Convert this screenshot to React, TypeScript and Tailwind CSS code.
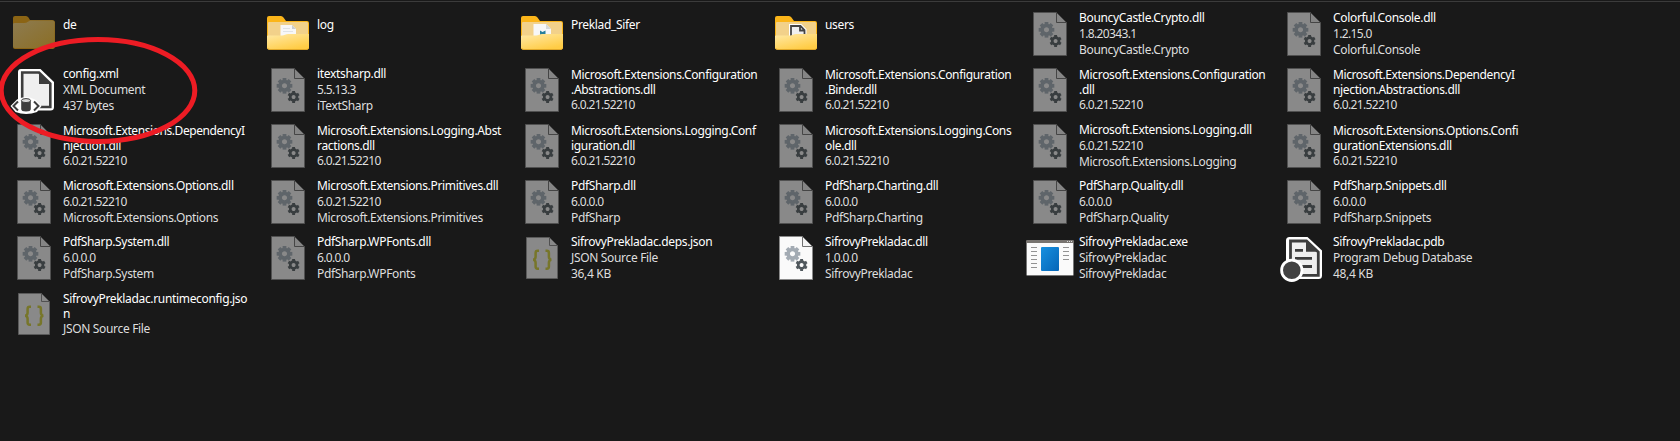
import React from "react";

type Kind = "folder" | "folderDoc" | "folderSheet" | "folderUsers" | "xml" | "dll" | "dllBright" | "json" | "exe" | "pdb";
type Entry = { kind: Kind; name: string[]; meta?: string[] };

const V = "6.0.21.52210";
const entries: Entry[] = [
  { kind: "folder", name: ["de"] },
  { kind: "folderDoc", name: ["log"] },
  { kind: "folderSheet", name: ["Preklad_Sifer"] },
  { kind: "folderUsers", name: ["users"] },
  { kind: "dll", name: ["BouncyCastle.Crypto.dll"], meta: ["1.8.20343.1", "BouncyCastle.Crypto"] },
  { kind: "dll", name: ["Colorful.Console.dll"], meta: ["1.2.15.0", "Colorful.Console"] },
  { kind: "xml", name: ["config.xml"], meta: ["XML Document", "437 bytes"] },
  { kind: "dll", name: ["itextsharp.dll"], meta: ["5.5.13.3", "iTextSharp"] },
  { kind: "dll", name: ["Microsoft.Extensions.Configuration", ".Abstractions.dll"], meta: [V] },
  { kind: "dll", name: ["Microsoft.Extensions.Configuration", ".Binder.dll"], meta: [V] },
  { kind: "dll", name: ["Microsoft.Extensions.Configuration", ".dll"], meta: [V] },
  { kind: "dll", name: ["Microsoft.Extensions.DependencyI", "njection.Abstractions.dll"], meta: [V] },
  { kind: "dll", name: ["Microsoft.Extensions.DependencyI", "njection.dll"], meta: [V] },
  { kind: "dll", name: ["Microsoft.Extensions.Logging.Abst", "ractions.dll"], meta: [V] },
  { kind: "dll", name: ["Microsoft.Extensions.Logging.Conf", "iguration.dll"], meta: [V] },
  { kind: "dll", name: ["Microsoft.Extensions.Logging.Cons", "ole.dll"], meta: [V] },
  { kind: "dll", name: ["Microsoft.Extensions.Logging.dll"], meta: [V, "Microsoft.Extensions.Logging"] },
  { kind: "dll", name: ["Microsoft.Extensions.Options.Confi", "gurationExtensions.dll"], meta: [V] },
  { kind: "dll", name: ["Microsoft.Extensions.Options.dll"], meta: [V, "Microsoft.Extensions.Options"] },
  { kind: "dll", name: ["Microsoft.Extensions.Primitives.dll"], meta: [V, "Microsoft.Extensions.Primitives"] },
  { kind: "dll", name: ["PdfSharp.dll"], meta: ["6.0.0.0", "PdfSharp"] },
  { kind: "dll", name: ["PdfSharp.Charting.dll"], meta: ["6.0.0.0", "PdfSharp.Charting"] },
  { kind: "dll", name: ["PdfSharp.Quality.dll"], meta: ["6.0.0.0", "PdfSharp.Quality"] },
  { kind: "dll", name: ["PdfSharp.Snippets.dll"], meta: ["6.0.0.0", "PdfSharp.Snippets"] },
  { kind: "dll", name: ["PdfSharp.System.dll"], meta: ["6.0.0.0", "PdfSharp.System"] },
  { kind: "dll", name: ["PdfSharp.WPFonts.dll"], meta: ["6.0.0.0", "PdfSharp.WPFonts"] },
  { kind: "json", name: ["SifrovyPrekladac.deps.json"], meta: ["JSON Source File", "36,4 KB"] },
  { kind: "dllBright", name: ["SifrovyPrekladac.dll"], meta: ["1.0.0.0", "SifrovyPrekladac"] },
  { kind: "exe", name: ["SifrovyPrekladac.exe"], meta: ["SifrovyPrekladac", "SifrovyPrekladac"] },
  { kind: "pdb", name: ["SifrovyPrekladac.pdb"], meta: ["Program Debug Database", "48,4 KB"] },
  { kind: "json", name: ["SifrovyPrekladac.runtimeconfig.jso", "n"], meta: ["JSON Source File"] },
];

function Gear({ cx, cy, r, fill }: { cx: number; cy: number; r: number; fill: string }) {
  const teeth = r > 6 ? 8 : 6;
  return (
    <g transform={`translate(${cx} ${cy})`}>
      <circle r={r * 0.56} fill="none" stroke={fill} strokeWidth={r * 0.46} />
      {Array.from({ length: teeth }, (_, i) => (
        <rect key={i} x={-r * 0.24} y={-r} width={r * 0.48} height={r * 0.4} fill={fill} transform={`rotate(${(i * 360) / teeth})`} />
      ))}
    </g>
  );
}

function Dll({ bright }: { bright?: boolean }) {
  return (
    <>
      <path d="M17.5 6.5H40.5L50.5 16.5V49.5H17.5Z" fill={bright ? "#fafafa" : "#898989"} stroke={bright ? "#8a8a8a" : "#505050"} />
      <path d="M40.5 6.5V16.5H50.5Z" fill={bright ? "#f4f4f4" : "#858585"} stroke={bright ? "#707070" : "#454545"} />
      <Gear cx={30.5} cy={23.8} r={7.8} fill={bright ? "#a3abb3" : "#5f656a"} />
      <Gear cx={39.6} cy={35} r={6} fill={bright ? "#50585d" : "#393e40"} />
    </>
  );
}

function Folder({ inner }: { inner: "doc" | "sheet" | "users" }) {
  return (
    <>
      <path d="M13 18Q13 16 15 16H27Q28.5 16 29.5 17.5L32 21H53Q55 21 55 23V47Q55 49.5 53 49.5H15Q13 49.5 13 47.5Z" fill="#fbb51a" />
      <path d="M14 23Q14 22 15 22H53Q54 22 54 23V38H14Z" fill="#f2d18a" />
      {inner === "doc" && (
        <>
          <path d="M26.5 25H38L42 29V38H26.5Z" fill="#f7f7f7" />
          <path d="M38 25V29H42Z" fill="#c9cdd1" />
          <path d="M29 28.5H36M29 31.5H39" stroke="#dfe2e5" />
        </>
      )}
      {inner === "sheet" && (
        <>
          <path d="M25.5 24H38L43 29V38H25.5Z" fill="#f7f7f7" />
          <path d="M38 24V29H43Z" fill="#d5d8da" />
          <path d="M32 30.5L34.5 32L37.5 30.5V36H32Z" fill="#287f9c" />
        </>
      )}
      {inner === "users" && <path d="M29 37V26H38.5L42.5 30V36" fill="#efefef" stroke="#fff" strokeWidth="4" />}
      {inner === "users" && <path d="M29 37V26H38.5L42.5 30V36M38 26V30.5H42.5" fill="#efefef" stroke="#444" strokeWidth="1.8" />}
      <path d="M13 36Q13 35.5 14 35.5H28Q29.5 35.5 31 34.7Q32.5 34 34 34H55V47Q55 49.5 53 49.5H15Q13 49.5 13 47.5Z" fill="url(#front)" />
      <path d="M13.5 48Q14 49.5 16 49.5H52Q54.5 49.5 54.8 48" fill="none" stroke="#e7ab27" strokeWidth=".8" />
    </>
  );
}

function Icon({ kind }: { kind: Kind }) {
  return (
    <svg className="h-14 w-[63px] shrink-0" viewBox="0 0 63 56">
      {kind === "folder" && (
        <>
          <path d="M13 18Q13 16 15 16H26Q27.5 16 28.5 17.5L30 20H52Q55 20 55 22.5V46Q55 49 52.5 49H15Q13 49 13 47Z" transform="translate(0 -6)" fill="#8b6414" />
          <path d="M13 24Q13 23 15 23H24Q26.5 23 28 21.8L30 20.5H52.5Q54.5 20.5 54.5 22.5V46Q54.5 48 52.5 48H15Q13 48 13 46Z" transform="translate(0 -6)" fill="url(#dim)" />
        </>
      )}
      {kind === "folderDoc" && <g transform="translate(0 -6)"><Folder inner="doc" /></g>}
      {kind === "folderSheet" && <g transform="translate(0 -6)"><Folder inner="sheet" /></g>}
      {kind === "folderUsers" && <g transform="translate(0 -6)"><Folder inner="users" /></g>}
      {kind === "dll" && <Dll />}
      {kind === "dllBright" && <Dll bright />}
      {kind === "json" && (
        <>
          <path d="M18.5 7.5H41.5L49.5 15.5V48.5H18.5Z" fill="#898989" stroke="#5a5a5a" />
          <path d="M41.5 7.5V15.5H49.5Z" fill="#898989" stroke="#505050" />
          <path d="M31 20.8H29.6Q27.6 20.8 27.6 23V26.7Q27.6 29.2 25.3 29.7Q27.6 30.2 27.6 32.7V36.5Q27.6 38.7 29.6 38.7H31M37.5 20.8H38.9Q40.9 20.8 40.9 23V26.7Q40.9 29.2 43.2 29.7Q40.9 30.2 40.9 32.7V36.5Q40.9 38.7 38.9 38.7H37.5" fill="none" stroke="#77762a" strokeWidth="2.5" />
        </>
      )}
      {kind === "exe" && (
        <>
          <rect x="10.5" y="10.5" width="47" height="35" rx="1" fill="#fafafa" stroke="#777" />
          <path d="M10 13V11.5Q10 10 11.5 10H56.5Q58 10 58 11.5V13Z" fill="#77736f" />
          <path d="M51 11.5H52M53 11.5H54M55 11.5H56" stroke="#ddd" />
          <path d="M15 17.5H21M15 21.5H21M15 25.5H21M15 29.5H21M15 33.5H21M15 37.5H21M47 17.5H53M47 21.5H53M47 25.5H53M47 29.5H53" stroke="#929292" />
          <rect x="25" y="17" width="18" height="24" rx="1" fill="url(#blue)" />
        </>
      )}
      {kind === "xml" && (
        <>
          <path d="M21 7H40.5L54 20V45Q54 48.5 50.5 48.5H21Q18 48.5 18 45V10Q18 7 21 7Z" fill="#fff" />
          <path d="M22.2 10.5H39L50.3 21.5V45H22.2Z" fill="#efefef" stroke="#3d3d3d" strokeWidth="2.6" />
          <path d="M39 10V22H51Z" fill="#3d3d3d" />
          <path d="M10.5 44L17 37.5Q26 32.5 35 37.5L41.5 44L37 50Q26 54 15.5 50Z" fill="#fff" />
          <path d="M18 39.5L13.5 44L18 48.5M34 39.5L38.5 44L34 48.5" fill="none" stroke="#3d3d3d" strokeWidth="2" />
          <path d="M21.2 39V47Q21.2 49.5 26 49.5T30.8 47V39Z" fill="#3d3d3d" />
          <ellipse cx="26" cy="38.6" rx="4.6" ry="2" fill="#d5d5d5" stroke="#3d3d3d" />
        </>
      )}
      {kind === "pdb" && (
        <>
          <path d="M19.5 7H37.5L52 20.5V45.5Q52 49 48.5 49H19.5Q16 49 16 45.5V10.5Q16 7 19.5 7Z" fill="#fff" />
          <path d="M20.5 11H36.5L48.3 22V45.3H20.5Z" fill="#efefef" stroke="#3d3d3d" strokeWidth="2.8" />
          <path d="M36 10V21.8H48.5Z" fill="#3d3d3d" />
          <path d="M25 20.3H33M25 28.3H42M32 36.5H42" stroke="#3d3d3d" strokeWidth="2.8" />
          <circle cx="21.8" cy="40.3" r="10.2" fill="#424242" stroke="#fff" strokeWidth="2.8" />
        </>
      )}
    </svg>
  );
}

function Item({ e }: { e: Entry }) {
  const wrap = e.name.length > 1;
  return (
    <div className="flex h-14 w-[254px]">
      <Icon kind={e.kind} />
      <div className={`min-w-0 whitespace-nowrap ${!e.meta ? "pt-[11px] leading-4" : wrap ? "pt-[5px] leading-[15px]" : "pt-1 leading-4"}`}>
        {e.name.map((n) => <div key={n} className={n.endsWith("DependencyI") ? "tracking-[-0.42px] text-white" : "text-white"}>{n}</div>)}
        {e.meta?.map((m, i) => (
          <div key={i} className={/^[\d.]+$/.test(m) ? "tracking-[-0.65px] text-[#dedede]" : "text-[#dedede]"}>{m}</div>
        ))}
      </div>
    </div>
  );
}

export default function App() {
  return (
    <main className="relative h-[441px] w-[1680px] overflow-hidden bg-[#191919] font-['Noto_Sans','Open_Sans',sans-serif] text-[12px] tracking-[-0.33px]">
      <svg className="absolute size-0" aria-hidden="true">
        <defs>
          <linearGradient id="front" x1="0" y1="0" x2=".6" y2="1"><stop stopColor="#ffe9a6" /><stop offset="1" stopColor="#ffcc45" /></linearGradient>
          <linearGradient id="dim" x1="0" y1="0" x2="1" y2="1"><stop stopColor="#8d7b50" /><stop offset="1" stopColor="#8b6e25" /></linearGradient>
          <linearGradient id="blue" x1="0" y1="0" x2="1" y2="1"><stop stopColor="#1790df" /><stop offset="1" stopColor="#0565b7" /></linearGradient>
        </defs>
      </svg>
      <div className="h-[6px] pt-px"><div className="h-px bg-[#3b3b3b]" /></div>
      <div className="grid grid-cols-[repeat(6,254px)] auto-rows-[56px]">
        {entries.map((e) => <Item key={e.name.join("")} e={e} />)}
      </div>
      <svg className="pointer-events-none absolute left-0 top-0 h-[160px] w-[210px]" viewBox="0 0 210 160">
        <ellipse cx="98" cy="90.5" rx="96.8" ry="51" fill="none" stroke="#ed1c24" strokeWidth="5" />
      </svg>
    </main>
  );
}
